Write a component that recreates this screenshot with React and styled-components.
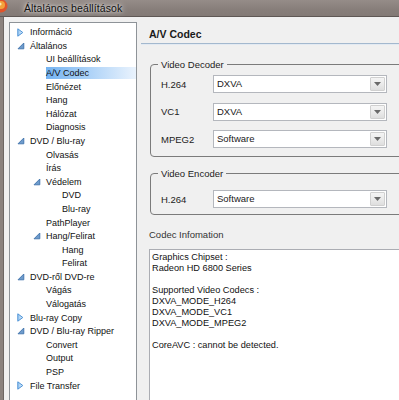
import React from 'react'
import styled, { createGlobalStyle } from 'styled-components'

const GlobalStyle = createGlobalStyle`
  html, body {
    margin: 0;
    padding: 0;
    background: #f0f0f0;
  }
  body {
    font-family: 'Liberation Sans', Arial, sans-serif;
  }
`

const treeItems = [
  { label: 'Információ', level: 0, toggle: 'closed' },
  { label: 'Általános', level: 0, toggle: 'open' },
  { label: 'UI beállítások', level: 1 },
  { label: 'A/V Codec', level: 1, selected: true },
  { label: 'Előnézet', level: 1 },
  { label: 'Hang', level: 1 },
  { label: 'Hálózat', level: 1 },
  { label: 'Diagnosis', level: 1 },
  { label: 'DVD / Blu-ray', level: 0, toggle: 'open' },
  { label: 'Olvasás', level: 1 },
  { label: 'Írás', level: 1 },
  { label: 'Védelem', level: 1, toggle: 'open' },
  { label: 'DVD', level: 2 },
  { label: 'Blu-ray', level: 2 },
  { label: 'PathPlayer', level: 1 },
  { label: 'Hang/Felirat', level: 1, toggle: 'open' },
  { label: 'Hang', level: 2 },
  { label: 'Felirat', level: 2 },
  { label: 'DVD-ről DVD-re', level: 0, toggle: 'open' },
  { label: 'Vágás', level: 1 },
  { label: 'Válogatás', level: 1 },
  { label: 'Blu-ray Copy', level: 0, toggle: 'closed' },
  { label: 'DVD / Blu-ray Ripper', level: 0, toggle: 'open' },
  { label: 'Convert', level: 1 },
  { label: 'Output', level: 1 },
  { label: 'PSP', level: 1 },
  { label: 'File Transfer', level: 0, toggle: 'closed' },
]

const codecInfo = [
  'Graphics Chipset :',
  'Radeon HD 6800 Series',
  '',
  'Supported Video Codecs :',
  'DXVA_MODE_H264',
  'DXVA_MODE_VC1',
  'DXVA_MODE_MPEG2',
  '',
  'CoreAVC : cannot be detected.',
]

const ClosedArrow = () => (
  <svg width='7' height='9' viewBox='0 0 7 9'>
    <defs>
      <linearGradient id='closedFill' x1='0' y1='0' x2='1' y2='0'>
        <stop offset='0' stopColor='#9cc9f2' />
        <stop offset='1' stopColor='#d9ecfb' />
      </linearGradient>
    </defs>
    <path d='M0.8 0.8 L5.8 4.5 L0.8 8.2 Z' fill='url(#closedFill)' stroke='#4f93d6' strokeWidth='1' />
  </svg>
)

const OpenArrow = () => (
  <svg width='8' height='8' viewBox='0 0 8 8'>
    <path d='M6.8 1 L6.8 6.8 L1 6.8 Z' fill='#6f9ccc' stroke='#3f73ab' strokeWidth='0.9' />
  </svg>
)

const App = () => {
  return (
    <>
      <GlobalStyle />
      <Viewport>
        <Window>
          <TitleBar>
            <AppIcon>
              <svg width='14' height='14' viewBox='0 0 14 14'>
                <circle cx='7' cy='7' r='6.5' fill='#e0542a' />
                <circle cx='7' cy='6' r='4' fill='#f3a23b' />
                <circle cx='6' cy='5' r='1.6' fill='#fde7b0' />
              </svg>
            </AppIcon>
            <Title>Általános beállítások</Title>
          </TitleBar>
          <Body>
            <Tree>
              {treeItems.map((item, i) => (
                <TreeRow key={i} level={item.level}>
                  <Toggle>
                    {item.toggle === 'closed' && <ClosedArrow />}
                    {item.toggle === 'open' && <OpenArrow />}
                  </Toggle>
                  <TreeLabel selected={item.selected}>{item.label}</TreeLabel>
                </TreeRow>
              ))}
            </Tree>
            <Pane>
              <PaneHeader>A/V Codec</PaneHeader>
              <Group top={14.5} padTop={5.5} padBottom={8}>
                <Legend>Video Decoder</Legend>
                <FieldGrid>
                  <FieldLabel>H.264</FieldLabel>
                  <Select value='DXVA' />
                  <FieldLabel>VC1</FieldLabel>
                  <Select value='DXVA' />
                  <FieldLabel>MPEG2</FieldLabel>
                  <Select value='Software' />
                </FieldGrid>
              </Group>
              <Group top={11} padTop={11} padBottom={6}>
                <Legend>Video Encoder</Legend>
                <FieldGrid>
                  <FieldLabel>H.264</FieldLabel>
                  <Select value='Software' />
                </FieldGrid>
              </Group>
              <InfoLabel>Codec Infomation</InfoLabel>
              <InfoBox>
                {codecInfo.map((line, i) => (
                  <InfoLine key={i}>{line || '\u00a0'}</InfoLine>
                ))}
              </InfoBox>
            </Pane>
          </Body>
        </Window>
      </Viewport>
    </>
  )
}

const Select = ({ value }) => (
  <SelectBox>
    <SelectValue>{value}</SelectValue>
    <SelectButton>
      <svg width='7' height='4' viewBox='0 0 7 4'>
        <path d='M0 0 L7 0 L3.5 4 Z' fill='#6a6a6a' />
      </svg>
    </SelectButton>
  </SelectBox>
)

const Viewport = styled.div`
  width: 399px;
  height: 400px;
  overflow: hidden;
`

const Window = styled.div`
  width: 430px;
  height: 400px;
  display: flex;
  flex-direction: column;
  background: #8b827e;
`

const TitleBar = styled.div`
  height: 16px;
  display: flex;
  align-items: center;
  gap: 16px;
  background: linear-gradient(180deg, #958c88 0%, #877e7a 60%, #837a76 100%);
  border-bottom: 1px solid #5f5855;
  flex-shrink: 0;
`

const AppIcon = styled.div`
  margin-left: -6px;
  margin-top: -4px;
  display: flex;
`

const Title = styled.div`
  font-size: 10.5px;
  color: #111;
  text-shadow: 0 0 6px rgba(255, 255, 255, 0.9), 0 0 3px rgba(255, 255, 255, 0.7);
  letter-spacing: 0.1px;
`

const Body = styled.div`
  flex: 1;
  display: flex;
  align-items: flex-start;
  margin-left: 3px;
  border-left: 1px solid #6d6663;
  background: #f0f0f0;
  padding: 5px 0 0 5px;
  gap: 4px;
  min-height: 0;
`

const Tree = styled.div`
  width: 126px;
  height: 420px;
  background: #fff;
  border: 1px solid #8e9398;
  padding-top: 2.4px;
  flex-shrink: 0;
`

const TreeRow = styled.div`
  height: 13.6px;
  display: flex;
  align-items: center;
  padding-left: ${({ level }) => 7 + level * 16}px;
  font-size: 9px;
  color: #111;
  white-space: nowrap;
`

const Toggle = styled.span`
  width: 13px;
  display: flex;
  align-items: center;
  flex-shrink: 0;
`

const TreeLabel = styled.span`
  flex: ${({ selected }) => (selected ? 1 : 'none')};
  height: 12px;
  line-height: 12px;
  background: ${({ selected }) =>
    selected ? 'linear-gradient(90deg, #74b3f1 0%, #a9d0f7 45%, #eaf3fd 100%)' : 'transparent'};
`

const Pane = styled.div`
  flex: 1;
  margin-top: -5px;
  display: flex;
  flex-direction: column;
  align-items: flex-start;
`

const PaneHeader = styled.div`
  align-self: stretch;
  height: 27px;
  box-sizing: border-box;
  padding: 11px 0 0 8px;
  font-size: 10.5px;
  font-weight: bold;
  color: #1a1a1a;
  border-bottom: 1px solid #a3b8ce;
  box-shadow: 0 1px 0 #e3eaf2;
`

const Group = styled.fieldset`
  margin: ${({ top }) => top}px 0 0 9px;
  width: 258px;
  box-sizing: border-box;
  border: 1px solid #7b7b7b;
  border-radius: 4px;
  padding: ${({ padTop, padBottom }) => `${padTop}px 0 ${padBottom}px 10px`};
  min-width: 0;
`

const Legend = styled.legend`
  font-size: 9.5px;
  line-height: 11px;
  color: #222;
  padding: 0 3px;
  margin-left: -3px;
`

const FieldGrid = styled.div`
  display: grid;
  grid-template-columns: 52px 174px;
  row-gap: 9.5px;
  align-items: center;
`

const FieldLabel = styled.span`
  font-size: 9.5px;
  color: #222;
`

const SelectBox = styled.div`
  height: 18px;
  box-sizing: border-box;
  border: 1px solid #b4b7bd;
  background: #fff;
  display: flex;
  align-items: stretch;
`

const SelectValue = styled.span`
  flex: 1;
  padding-left: 3px;
  font-size: 9.5px;
  line-height: 16px;
  color: #1a1a1a;
`

const SelectButton = styled.span`
  width: 13px;
  margin: 1px;
  border: 1px solid #d0d0d0;
  border-radius: 1px;
  background: linear-gradient(180deg, #f4f4f4 0%, #ebebeb 50%, #dedede 100%);
  display: flex;
  align-items: center;
  justify-content: center;
`

const InfoLabel = styled.div`
  margin: 13.5px 0 0 8px;
  font-size: 9.5px;
  line-height: 11px;
  color: #333;
`

const InfoBox = styled.div`
  margin: 9.5px 0 0 8px;
  width: 262px;
  height: 160px;
  box-sizing: border-box;
  background: #fff;
  border: 1px solid #abadb3;
  padding: 1.5px 2px;
`

const InfoLine = styled.div`
  font-size: 9.2px;
  line-height: 11px;
  color: #111;
  white-space: nowrap;
`

export default App
